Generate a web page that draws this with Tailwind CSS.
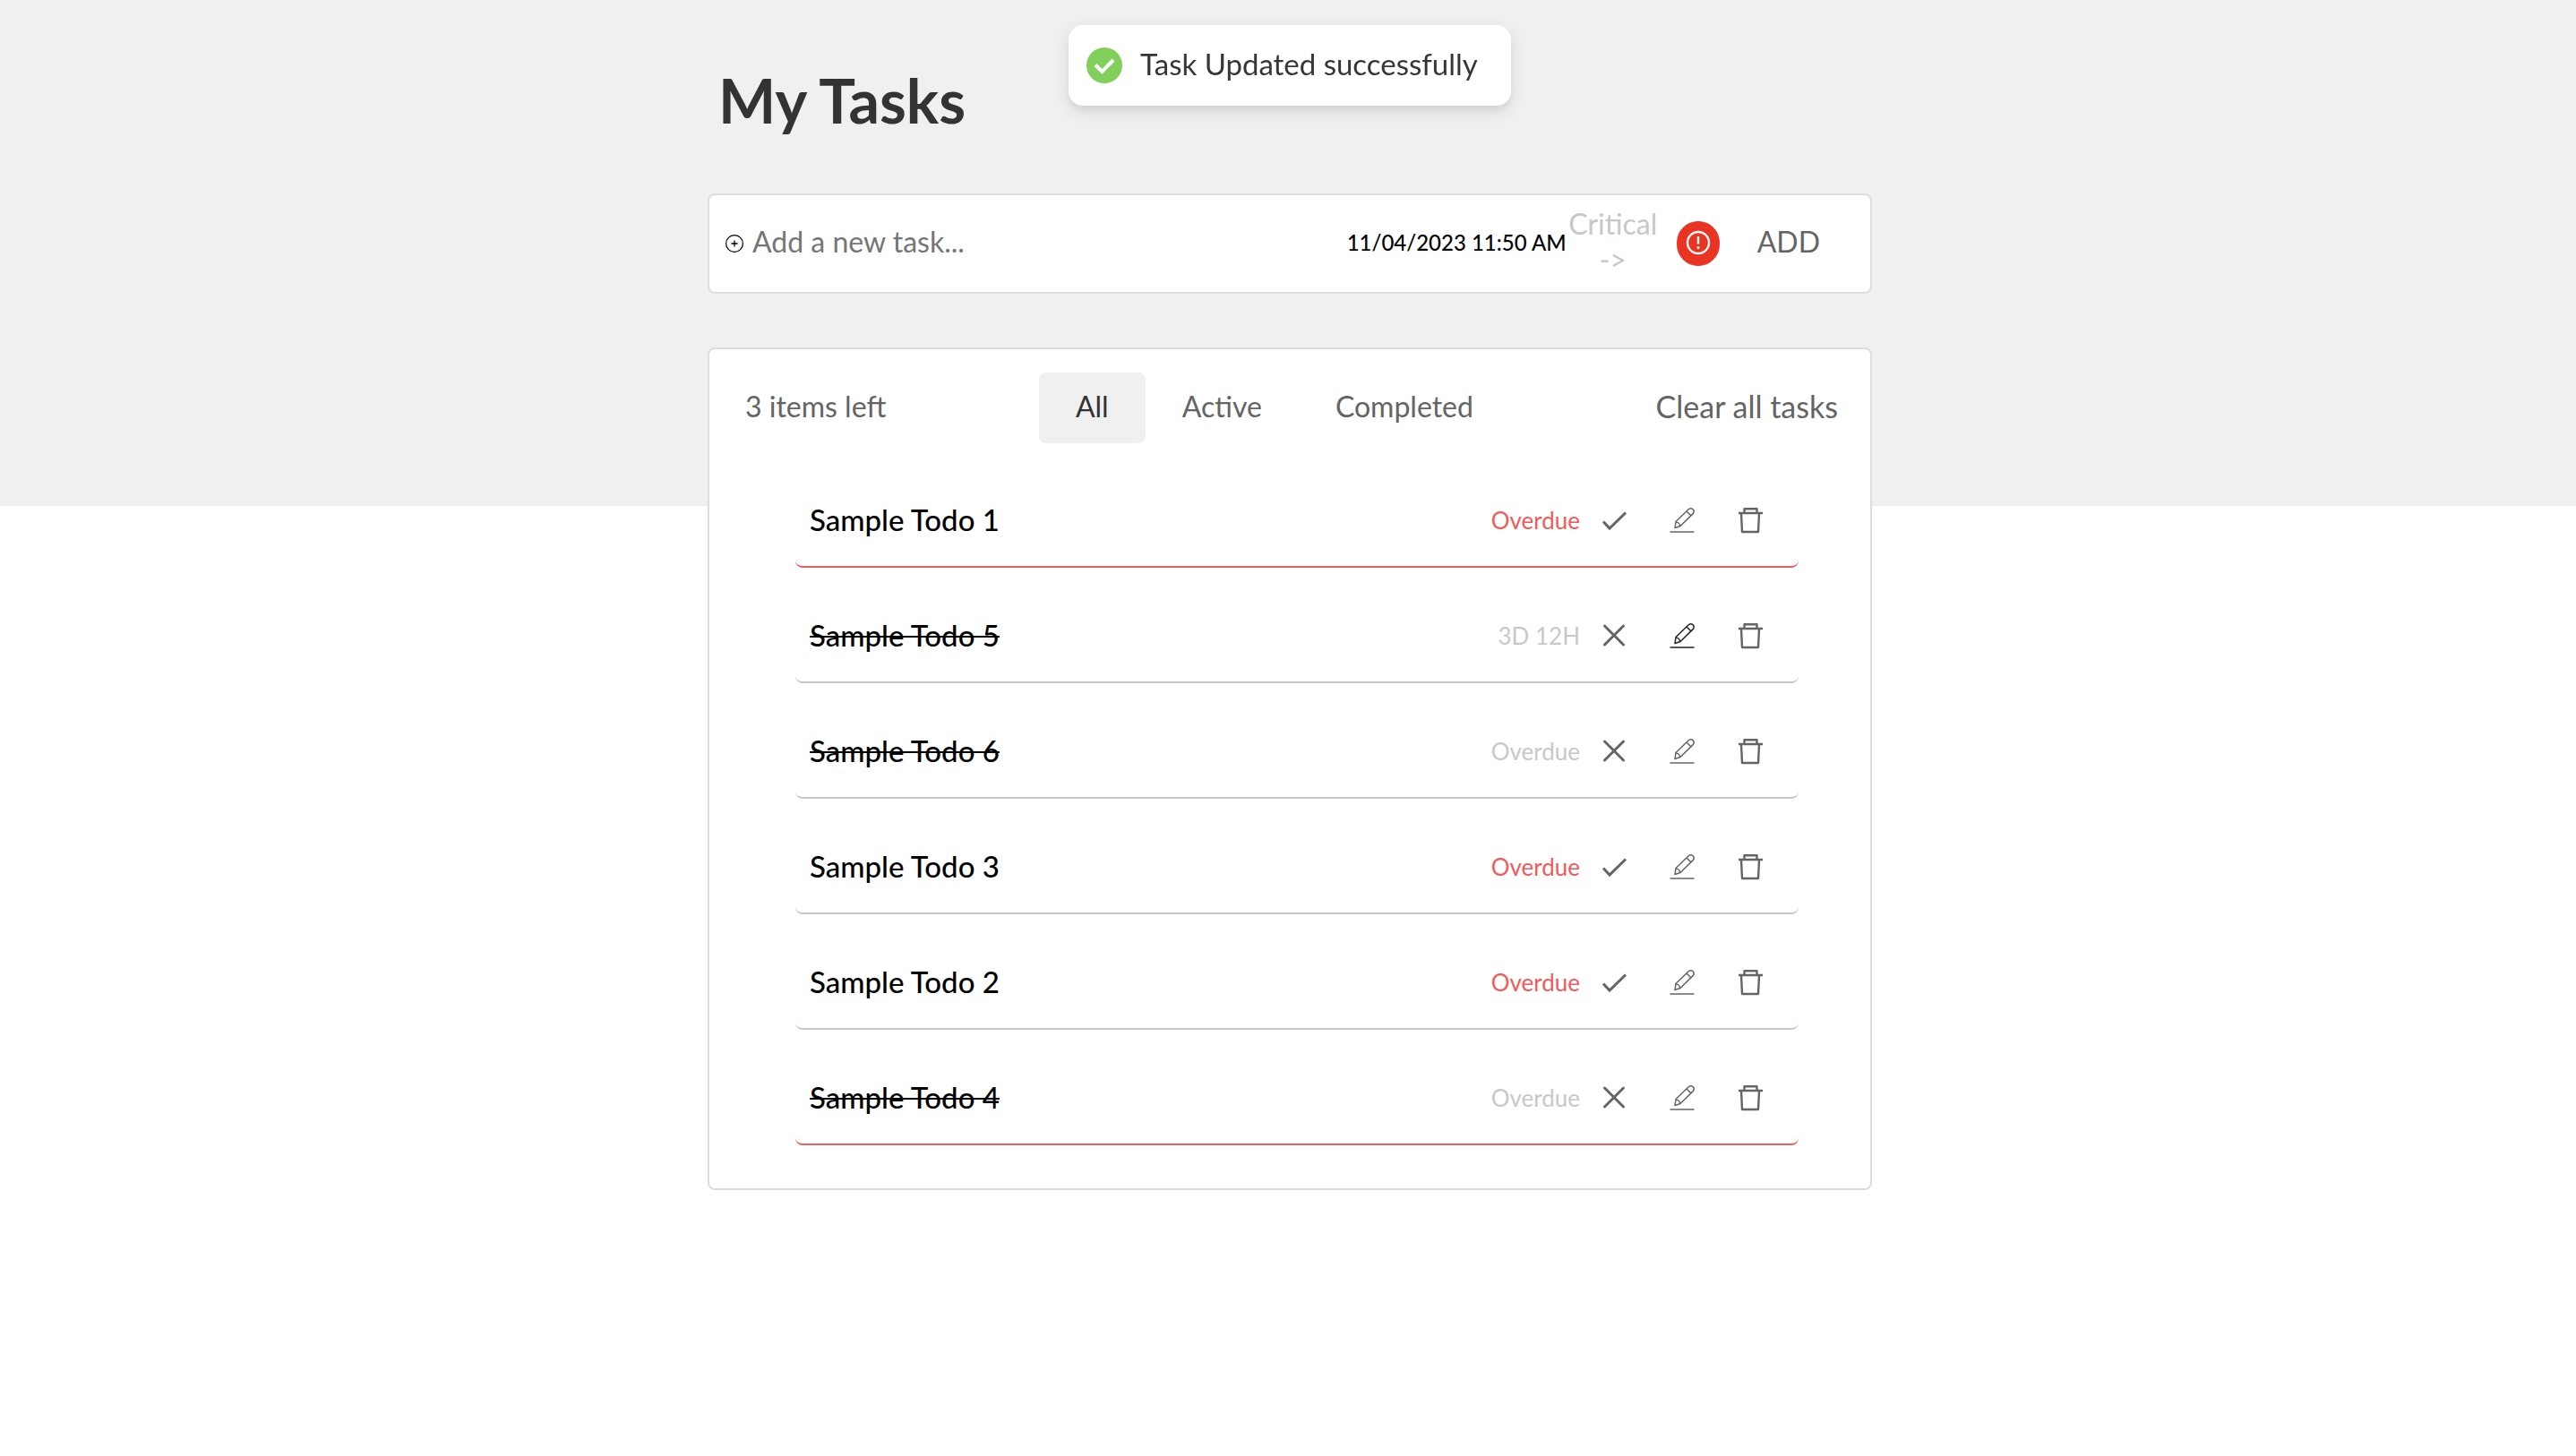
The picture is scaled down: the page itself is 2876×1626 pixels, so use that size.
<!DOCTYPE html>
<html lang="en">
<head>
<meta charset="utf-8">
<title>My Tasks</title>
<script src="https://cdn.jsdelivr.net/npm/@tailwindcss/browser@4"></script>
</head>
<body class="relative min-h-screen bg-white pl-1 font-['Lato',sans-serif] text-[32px] leading-10 text-[#646464]">

<svg class="hidden" aria-hidden="true">
  <symbol id="check" viewBox="0 0 32 32"><path d="M4 17.500l7 7.500L29 7.500" fill="none" stroke="currentColor" stroke-width="3"/></symbol>
  <symbol id="cross" viewBox="0 0 32 32"><path d="M5.500 5l21 21M26.500 5L5.500 26" fill="none" stroke="currentColor" stroke-width="3" stroke-linecap="round"/></symbol>
  <symbol id="pencil" viewBox="0 0 32 32"><g fill="none" stroke="currentColor" stroke-width="1.500" stroke-linejoin="round" stroke-linecap="round"><path d="M3 29h26M8 24.500l1-7L23.500 3.500a3.500 3.500 0 0 1 4.900 4.900L14 22.500zM21 6l5 5M9 18c2.500 0 4.500 2 4.500 4.500"/></g></symbol>
  <symbol id="trash" viewBox="0 0 32 32"><path d="M3 8h27M6 8.500l1 20.500h18l1-20.500M9.500 8V3.200h14V8" fill="none" stroke="currentColor" stroke-width="2.400" stroke-linejoin="round"/></symbol>
</svg>

<div class="absolute inset-x-0 top-0 -z-10 h-[565px] bg-[#f0f0f0]"></div>

<div role="status" class="fixed top-7 left-1/2 ml-0.5 flex h-[90px] w-[494px] -translate-x-1/2 items-center rounded-2xl bg-white pl-5 text-[#363636] shadow-[0_6px_20px_rgba(0,0,0,0.1),0_6px_6px_rgba(0,0,0,0.05)]">
  <svg class="size-10" viewBox="0 0 40 40"><circle cx="20" cy="20" r="20" fill="#80d05b"/><path d="M10 19.500l7.500 7.500L30 14" fill="none" stroke="#fff" stroke-width="4"/></svg>
  <span class="ml-5 pb-1 text-[33px]">Task Updated successfully</span>
</div>

<main class="mx-auto max-w-[1300px]">
  <h1 class="px-3 pt-18 pb-16 text-[68px] leading-20 font-bold text-[#333]">My Tasks</h1>

  <form class="flex h-[112px] items-center rounded-lg border-2 border-[#ddd] bg-white pl-[18px]">
    <svg class="size-5 text-black" viewBox="0 0 20 20" fill="none" stroke="currentColor"><circle cx="10" cy="10" r="9.400" stroke-width="1.200"/><path d="M10 6.500v7M6.500 10h7" stroke-width="1.300"/></svg>
    <input type="text" aria-label="New task" placeholder="Add a new task..." class="ml-2.5 min-w-0 flex-1 pb-1 outline-none placeholder:text-[#757575]">
    <input type="text" aria-label="Due date" value="11/04/2023 11:50 AM" class="w-[246px] pb-0.5 text-[24px] font-medium text-black outline-none">
    <span id="priority" class="w-[102px] pb-1 text-center text-[#c8c8c8]">Critical -&gt;</span>
    <button type="button" aria-labelledby="priority" class="ml-5 flex h-[50px] w-12 items-center justify-center rounded-full bg-[#e93323] pb-0.5 text-white">
      <svg class="size-7" viewBox="0 0 28 28" fill="none" stroke="currentColor" stroke-width="2.400"><circle cx="14" cy="14" r="12"/><path d="M14 7v8.500M14 18v3"/></svg>
    </button>
    <button type="submit" class="mr-14 ml-[42px] pb-1">ADD</button>
  </form>

  <section class="mt-15 rounded-lg border-2 border-[#ddd] bg-white pt-[26px] pb-12">
    <header class="flex items-center justify-between pr-9 pl-10">
      <p class="mr-2 pb-1">3 items left</p>
      <nav class="flex">
        <button class="h-[79px] rounded-lg bg-[#f0f0f0] px-[41px] pb-1 text-[#333]">All</button>
        <button class="h-[79px] px-[41px] pb-1">Active</button>
        <button class="h-[79px] px-[41px] pb-1">Completed</button>
      </nav>
      <button class="pb-1 text-[34px]">Clear all tasks</button>
    </header>
    <ul id="list" class="mt-[34px] flex flex-col gap-6 pr-20 pl-24"></ul>
  </section>
</main>

<script>
  const tasks = [
    { name: 'Sample Todo 1', due: 'Overdue', critical: true },
    { name: 'Sample Todo 5', due: '3D 12H', done: true, editing: true },
    { name: 'Sample Todo 6', due: 'Overdue', done: true },
    { name: 'Sample Todo 3', due: 'Overdue' },
    { name: 'Sample Todo 2', due: 'Overdue' },
    { name: 'Sample Todo 4', due: 'Overdue', done: true, critical: true },
  ];
  const action = (label, icon, color) =>
    `<button aria-label="${label}" class="flex w-[76px] justify-center ${color}"><svg class="size-8"><use href="#${icon}"/></svg></button>`;
  document.getElementById('list').innerHTML = tasks.map(t => `
    <li class="flex h-[105px] items-center rounded-lg border-b-2 ${t.critical ? 'border-[#e56060]' : 'border-[#c8c8c8]'} px-4">
      <span class="pb-0.5 text-[33px] font-medium text-black ${t.done ? 'line-through decoration-2' : ''}">${t.name}</span>
      <span class="ml-auto text-[26px] ${t.done ? 'text-[#c8c8c8]' : 'text-[#f05a5a]'}">${t.due}</span>
      ${t.done ? action('Mark as active', 'cross', '') : action('Mark as done', 'check', '')}
      ${action('Edit', 'pencil', t.editing ? 'text-[#222]' : '')}
      ${action('Delete', 'trash', '')}
    </li>`).join('');
</script>
</body>
</html>
